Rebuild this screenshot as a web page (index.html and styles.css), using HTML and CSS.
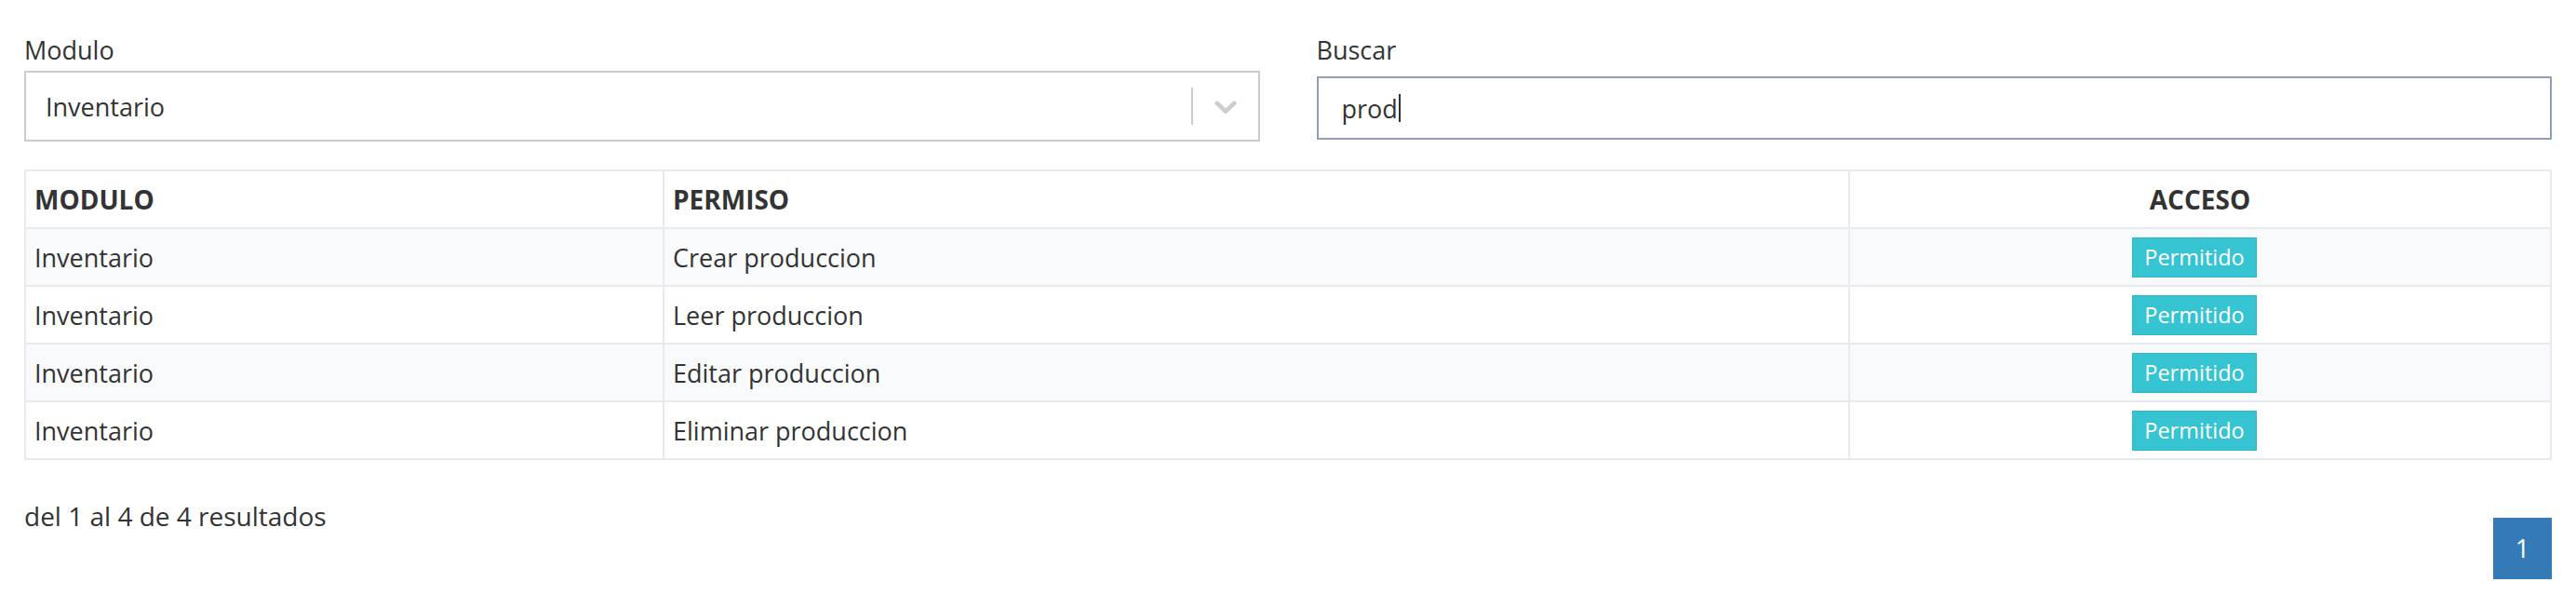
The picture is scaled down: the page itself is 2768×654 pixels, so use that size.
FILE: index.html
```html
<!DOCTYPE html>
<html lang="es">
<head>
    <meta charset="UTF-8">
    <meta name="viewport" content="width=device-width, initial-scale=1.0">
    <title>Permisos</title>
    <link rel="stylesheet" href="styles.css">
</head>
<body>

    <div class="page">
        <div class="filters">
            <div class="field">
                <label class="field-label">Modulo</label>
                <div class="select">
                    <div class="select-value">Inventario</div>
                    <div class="select-indicators">
                        <span class="select-separator"></span>
                        <span class="select-arrow">
                            <svg width="40" height="40" viewBox="0 0 20 20" aria-hidden="true">
                                <path d="M4.516 7.548c0.436-0.446 1.043-0.481 1.576 0l3.908 3.747 3.908-3.747c0.533-0.481 1.141-0.446 1.574 0 0.436 0.445 0.408 1.197 0 1.615-0.406 0.418-4.695 4.502-4.695 4.502-0.217 0.223-0.502 0.335-0.787 0.335s-0.57-0.112-0.789-0.335c0 0-4.287-4.084-4.695-4.502s-0.436-1.17 0-1.615z"></path>
                            </svg>
                        </span>
                    </div>
                </div>
            </div>
            <div class="field">
                <label class="field-label">Buscar</label>
                <div class="search-box"><span>prod</span><span class="caret"></span></div>
            </div>
        </div>

        <table class="permisos">
            <colgroup>
                <col class="col-modulo">
                <col class="col-permiso">
                <col class="col-acceso">
            </colgroup>
            <thead>
                <tr>
                    <th>MODULO</th>
                    <th>PERMISO</th>
                    <th class="center">ACCESO</th>
                </tr>
            </thead>
            <tbody>
                <tr>
                    <td>Inventario</td>
                    <td>Crear produccion</td>
                    <td class="center"><span class="badge">Permitido</span></td>
                </tr>
                <tr>
                    <td>Inventario</td>
                    <td>Leer produccion</td>
                    <td class="center"><span class="badge">Permitido</span></td>
                </tr>
                <tr>
                    <td>Inventario</td>
                    <td>Editar produccion</td>
                    <td class="center"><span class="badge">Permitido</span></td>
                </tr>
                <tr>
                    <td>Inventario</td>
                    <td>Eliminar produccion</td>
                    <td class="center"><span class="badge">Permitido</span></td>
                </tr>
            </tbody>
        </table>

        <div class="table-footer">
            <div class="summary">del 1 al 4 de 4 resultados</div>
            <ul class="pager">
                <li class="active">1</li>
            </ul>
        </div>
    </div>

</body>
</html>
```

FILE: styles.css
```css
body {
    font-family: "Open Sans", "Liberation Sans", sans-serif;
    font-size: 27px;
    color: #333;
    background-color: #fff;
    margin: 0;
    padding: 0;
}
.page {
    padding: 36px 26px 0;
}
.filters {
    display: grid;
    grid-template-columns: 1fr 1fr;
    column-gap: 61px;
    align-items: start;
}
.field-label {
    display: block;
    line-height: 36px;
}
.select {
    display: flex;
    align-items: center;
    height: 76px;
    margin-top: 4px;
    border: 2px solid #ccc;
    box-sizing: border-box;
}
.select-value {
    flex: 1;
    padding-left: 21px;
}
.select-indicators {
    display: flex;
    align-items: center;
}
.select-separator {
    width: 2px;
    height: 40px;
    background-color: #ccc;
}
.select-arrow {
    display: flex;
    justify-content: center;
    width: 70px;
}
.select-arrow svg {
    fill: #ccc;
}
.search-box {
    display: flex;
    align-items: center;
    height: 68px;
    margin-top: 10px;
    padding-left: 25px;
    border: 2px solid #909fbd;
    box-sizing: border-box;
}
.caret {
    display: inline-block;
    width: 2px;
    height: 30px;
    margin-left: 1px;
    background-color: #333;
}
.permisos {
    width: 100%;
    margin-top: 30px;
    border-collapse: collapse;
    table-layout: fixed;
    border: 2px solid #e7ebf0;
}
.col-modulo {
    width: 686px;
}
.col-permiso {
    width: 1274px;
}
.permisos th,
.permisos td {
    height: 60px;
    padding: 0 9px;
    border: 2px solid #e7ebf0;
    text-align: left;
}
.permisos th {
    font-size: 28px;
    font-weight: 700;
}
.permisos tbody tr:nth-child(odd) {
    background-color: #f9fafc;
}
.permisos .center {
    text-align: center;
}
.badge {
    display: inline-block;
    height: 43px;
    line-height: 41px;
    padding: 0 12px;
    margin-right: 12px;
    font-size: 23.5px;
    color: #fff;
    background-color: #36c4d3;
    border: 1px solid #2db7c6;
    box-sizing: border-box;
    vertical-align: middle;
}
.table-footer {
    display: flex;
    justify-content: space-between;
    align-items: flex-start;
}
.summary {
    margin-top: 42px;
    font-size: 28px;
    line-height: 36px;
}
.pager {
    list-style: none;
    margin: 62px 0 0;
    padding: 0;
}
.pager li {
    width: 63px;
    height: 66px;
    line-height: 66px;
    text-align: center;
    color: #fff;
    background-color: #337ab7;
}
```
